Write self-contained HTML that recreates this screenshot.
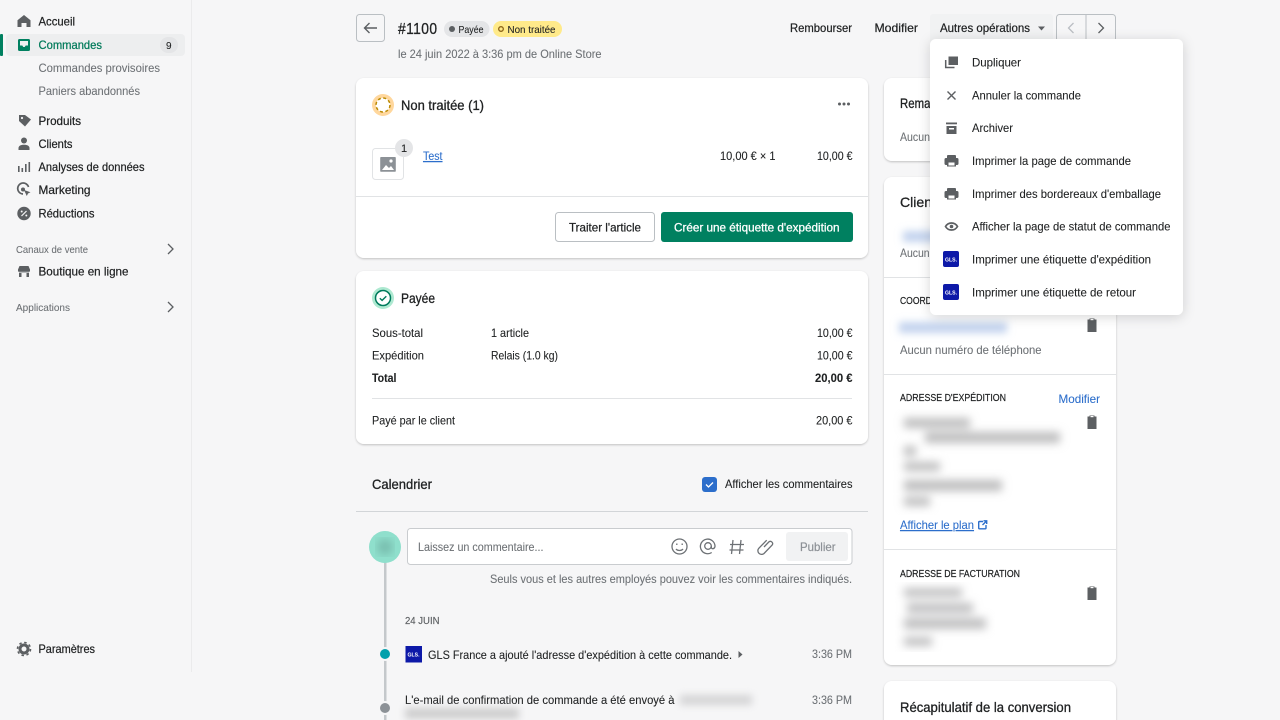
<!DOCTYPE html>
<html lang="fr"><head><meta charset="utf-8"><title>#1100</title>
<style>
html,body{margin:0;padding:0;background:#f6f6f7;width:1280px;height:720px;overflow:hidden}
svg{display:block}
text{font-family:"Liberation Sans",sans-serif;font-size:12px;fill:#202223;stroke:#202223;stroke-width:.08}
.m{stroke:#202223;stroke-width:.22}
.g{fill:#6d7175;stroke:#6d7175}
.h{font-size:14px;stroke:#202223;stroke-width:.3}
.s{font-size:10.5px;stroke:#202223;stroke-width:.2}
.b{font-weight:bold}
.l{fill:#2c6ecb;stroke:#2c6ecb}
.i{fill:#5c5f62}
</style></head><body>
<svg xmlns="http://www.w3.org/2000/svg" width="1280" height="720" viewBox="0 0 1280 720">
<defs>
<filter id="c" x="-5%" y="-5%" width="110%" height="110%"><feDropShadow dx="0" dy="1" stdDeviation="1" flood-color="#000" flood-opacity=".22"/></filter>
<filter id="p" x="-15%" y="-15%" width="130%" height="130%"><feDropShadow dx="0" dy="2" stdDeviation="6" flood-color="#000" flood-opacity=".16"/></filter>
<filter id="bl" x="-30%" y="-150%" width="160%" height="400%"><feGaussianBlur stdDeviation="4"/></filter>
<filter id="bg" x="-10%" y="-10%" width="120%" height="120%"><feGaussianBlur stdDeviation="4.500"/></filter>
</defs>
<rect width="1280" height="720" fill="#f6f6f7"/>

<!-- sidebar -->
<rect x="191" y="0" width="1" height="672" fill="#ebebec"/>
<rect x="6" y="34" width="179" height="22" rx="4" fill="#edeeef"/>
<rect x="0" y="34" width="3" height="22" rx="1" fill="#008060"/>
<rect x="160" y="37" width="18" height="16" rx="8" fill="#e4e5e7"/>
<text x="166" y="49" style="font-size:10px" textLength="6">9</text>

<path class="i" d="M24 15l6.5 5.2V27h-4v-4h-5v4h-4v-6.800z"/>
<path d="M19.500 39h9a1.500 1.500 0 0 1 1.500 1.500v9a1.500 1.500 0 0 1-1.500 1.500h-9a1.500 1.500 0 0 1-1.500-1.500v-9a1.500 1.500 0 0 1 1.500-1.500zM20 41v4.500h2.300l1 1.500h1.400l1-1.500H28V41z" fill="#008060" fill-rule="evenodd"/>
<path class="i" d="M19 115h5l1 0 6 4.500-6 7-6-5.500z"/><circle cx="22" cy="118" r="1.100" fill="#f6f6f7"/>
<circle class="i" cx="24" cy="140.500" r="3"/><path class="i" d="M18.500 150v-2c0-2 2-3.300 5.500-3.300s5.500 1.300 5.500 3.300v2z"/>
<g class="i"><rect x="18" y="166" width="1.600" height="6"/><rect x="21.500" y="168" width="1.600" height="4"/><rect x="25" y="164" width="1.600" height="8"/><rect x="28.500" y="162" width="1.600" height="10"/></g>
<path d="M28.500 187a5.500 5.500 0 1 0-5.500 7" fill="none" stroke="#5c5f62" stroke-width="1.700"/><circle class="i" cx="23" cy="189.500" r="2"/><path class="i" d="M24 190l6.500 2.300-2.500 1.200-1.200 2.500z"/>
<circle class="i" cx="24" cy="213.500" r="6.700"/><path d="M21.500 216l5-5" stroke="#f6f6f7" stroke-width="1.200"/><circle cx="21.700" cy="211.500" r="1" fill="#f6f6f7"/><circle cx="26.300" cy="215.500" r="1" fill="#f6f6f7"/>
<path class="i" d="M19.500 266h9l1.500 3.500v1.500a1.800 1.800 0 0 1-1 1v5h-10v-5a1.800 1.800 0 0 1-1-1v-1.500z"/><rect x="21.500" y="273" width="5" height="4.500" fill="#f6f6f7"/><path d="M19 272.200h10" stroke="#f6f6f7" stroke-width=".8"/>
<circle cx="24" cy="649" r="4" fill="none" stroke="#5c5f62" stroke-width="3"/><circle cx="24" cy="649" r="6.500" fill="none" stroke="#5c5f62" stroke-width="1.600" stroke-dasharray="2.500 2.600"/>

<text class="m" x="38.500" y="25.500" textLength="36.500" lengthAdjust="spacingAndGlyphs">Accueil</text>
<text x="38.500" y="49" textLength="63.500" lengthAdjust="spacingAndGlyphs" style="fill:#007a5a;stroke:#007a5a;stroke-width:.25">Commandes</text>
<text class="g" x="38.500" y="72" textLength="121.500" lengthAdjust="spacingAndGlyphs">Commandes provisoires</text>
<text class="g" x="38.500" y="95" textLength="101.500" lengthAdjust="spacingAndGlyphs">Paniers abandonnés</text>
<text class="m" x="38.500" y="125" textLength="42.500" lengthAdjust="spacingAndGlyphs">Produits</text>
<text class="m" x="38.500" y="148" textLength="34" lengthAdjust="spacingAndGlyphs">Clients</text>
<text class="m" x="38.500" y="171" textLength="106" lengthAdjust="spacingAndGlyphs">Analyses de données</text>
<text class="m" x="38.500" y="194" textLength="52" lengthAdjust="spacingAndGlyphs">Marketing</text>
<text class="m" x="38.500" y="217.500" textLength="56" lengthAdjust="spacingAndGlyphs">Réductions</text>
<text class="g" x="16" y="253" style="font-size:10.500px" textLength="72" lengthAdjust="spacingAndGlyphs">Canaux de vente</text>
<path d="M168 244l5 5-5 5" fill="none" stroke="#5c5f62" stroke-width="1.300"/>
<text class="m" x="38.500" y="275.500" textLength="90" lengthAdjust="spacingAndGlyphs">Boutique en ligne</text>
<text class="g" x="16" y="311" style="font-size:10.500px" textLength="54" lengthAdjust="spacingAndGlyphs">Applications</text>
<path d="M168 302l5 5-5 5" fill="none" stroke="#5c5f62" stroke-width="1.300"/>
<text class="m" x="38.500" y="653" textLength="56.500" lengthAdjust="spacingAndGlyphs">Paramètres</text>

<!-- header -->
<rect x="356.500" y="14.500" width="28" height="27" rx="3" fill="#f6f6f7" stroke="#babfc3"/>
<path d="M377 28h-12M369.500 23l-5 5 5 5" fill="none" stroke="#5c5f62" stroke-width="1.400"/>
<text x="398" y="34" style="font-size:16px;stroke:#202223;stroke-width:.3;letter-spacing:.5px" textLength="39.500" lengthAdjust="spacingAndGlyphs">#1100</text>
<rect x="444" y="21" width="45.500" height="16" rx="8" fill="#e4e5e7"/><circle cx="452" cy="29" r="3" fill="#5c5f62"/>
<text x="458.500" y="33" style="font-size:10.500px" textLength="25" lengthAdjust="spacingAndGlyphs">Payée</text>
<rect x="493" y="21" width="69" height="16" rx="8" fill="#ffea8a"/><circle cx="501" cy="29" r="2.300" fill="none" stroke="#8a6116" stroke-width="1.300"/>
<text x="507.500" y="33" style="font-size:10.500px" textLength="48" lengthAdjust="spacingAndGlyphs">Non traitée</text>
<text class="g" x="398" y="58" textLength="203.500" lengthAdjust="spacingAndGlyphs">le 24 juin 2022 à 3:36 pm de Online Store</text>
<text class="m" x="790" y="32" textLength="62" lengthAdjust="spacingAndGlyphs">Rembourser</text>
<text class="m" x="874.500" y="32" textLength="43.500" lengthAdjust="spacingAndGlyphs">Modifier</text>
<rect x="930" y="14" width="123" height="30" rx="3" fill="#f1f2f3"/>
<text class="m" x="940" y="32" textLength="90" lengthAdjust="spacingAndGlyphs">Autres opérations</text>
<path d="M1038 26.500h7l-3.500 4z" fill="#5c5f62"/>
<rect x="1056.500" y="14.500" width="59" height="27" rx="3" fill="#f6f6f7" stroke="#babfc3"/><path d="M1086 14v28" stroke="#babfc3"/>
<path d="M1073.500 23l-5 5 5 5" fill="none" stroke="#babec3" stroke-width="1.300"/>
<path d="M1098.500 23l5 5-5 5" fill="none" stroke="#5c5f62" stroke-width="1.300"/>

<!-- card 1 -->
<rect x="356" y="78" width="512" height="180" rx="8" fill="#fff" filter="url(#c)"/>
<circle cx="383" cy="105" r="11" fill="#ffd79d"/><circle cx="383" cy="105" r="7" fill="#fff" stroke="#b98900" stroke-width="1.500" stroke-dasharray="3 2.500"/>
<text class="h" x="401" y="110" textLength="83" lengthAdjust="spacingAndGlyphs">Non traitée (1)</text>
<g fill="#5c5f62"><circle cx="839.500" cy="104" r="1.500"/><circle cx="844" cy="104" r="1.500"/><circle cx="848.500" cy="104" r="1.500"/></g>
<rect x="372.500" y="148.500" width="31" height="31" rx="3" fill="#fff" stroke="#e1e3e5"/>
<path d="M381 157h14a.8.8 0 0 1 .8.8V171a.8.8 0 0 1-.8.8h-14a.8.8 0 0 1-.8-.8v-13.200a.8.8 0 0 1 .8-.8z" fill="#8c9196"/>
<path d="M382 170l4-5 3 3 2-2 3 4z" fill="#fff"/><circle cx="391" cy="161" r="1.600" fill="#fff"/>
<circle cx="404" cy="148" r="9" fill="#e4e5e7"/><text x="401" y="152" style="font-size:11px" textLength="6">1</text>
<text class="l" x="423" y="160" text-decoration="underline" textLength="19.500" lengthAdjust="spacingAndGlyphs">Test</text>
<text x="720" y="160" textLength="55.500" lengthAdjust="spacingAndGlyphs">10,00 € × 1</text>
<text x="817" y="160" textLength="35.500" lengthAdjust="spacingAndGlyphs">10,00 €</text>
<rect x="356" y="196" width="512" height="1" fill="#e1e3e5"/>
<rect x="555.500" y="212.500" width="99" height="29" rx="3" fill="#fff" stroke="#babfc3"/>
<text class="m" x="569" y="231.500" textLength="72" lengthAdjust="spacingAndGlyphs">Traiter l'article</text>
<rect x="661" y="212" width="192" height="30" rx="3" fill="#008060"/>
<text x="674" y="231.500" style="fill:#fff;stroke:#fff;stroke-width:.28" textLength="165.500" lengthAdjust="spacingAndGlyphs">Créer une étiquette d'expédition</text>

<!-- card 2 -->
<rect x="356" y="271" width="512" height="173" rx="8" fill="#fff" filter="url(#c)"/>
<circle cx="383" cy="298" r="11" fill="#aee9d1"/><circle cx="383" cy="298" r="7.500" fill="#fff" stroke="#007a5c" stroke-width="1.500"/>
<path d="M379.800 298.200l2.300 2.200 4.200-4.200" fill="none" stroke="#007a5c" stroke-width="1.400"/>
<text class="h" x="401" y="303" textLength="34" lengthAdjust="spacingAndGlyphs">Payée</text>
<text x="372" y="337" textLength="51" lengthAdjust="spacingAndGlyphs">Sous-total</text>
<text x="491" y="337" textLength="38" lengthAdjust="spacingAndGlyphs">1 article</text>
<text x="817" y="337" textLength="35.500" lengthAdjust="spacingAndGlyphs">10,00 €</text>
<text x="372" y="359.500" textLength="52" lengthAdjust="spacingAndGlyphs">Expédition</text>
<text x="491" y="359.500" textLength="67" lengthAdjust="spacingAndGlyphs">Relais (1.0 kg)</text>
<text x="817" y="359.500" textLength="35.500" lengthAdjust="spacingAndGlyphs">10,00 €</text>
<text class="b" x="372" y="382" textLength="24.500" lengthAdjust="spacingAndGlyphs">Total</text>
<text class="b" x="815" y="382" textLength="37.500" lengthAdjust="spacingAndGlyphs">20,00 €</text>
<rect x="372" y="398" width="480" height="1" fill="#e1e3e5"/>
<text x="372" y="424.500" textLength="83" lengthAdjust="spacingAndGlyphs">Payé par le client</text>
<text x="816" y="424.500" textLength="36.500" lengthAdjust="spacingAndGlyphs">20,00 €</text>

<!-- timeline -->
<text class="h" x="372" y="489" textLength="60" lengthAdjust="spacingAndGlyphs">Calendrier</text>
<rect x="702" y="477" width="15" height="15" rx="3" fill="#2c6ecb"/><path d="M706 484.500l2.500 2.500 4.500-4.500" fill="none" stroke="#fff" stroke-width="1.300"/>
<text x="725" y="488" textLength="127.500" lengthAdjust="spacingAndGlyphs">Afficher les commentaires</text>
<rect x="356" y="511" width="512" height="1" fill="#d2d5d8"/>
<rect x="384" y="560" width="2.500" height="160" fill="#c4c8cb"/>
<circle cx="385" cy="547" r="16" fill="#8fdfcc"/><circle cx="385" cy="547" r="8" fill="#78bdae" filter="url(#bg)"/>
<rect x="407.500" y="528.500" width="444.500" height="36" rx="3" fill="#fff" stroke="#c9cccf"/>
<text class="g" x="418" y="551" textLength="125.500" lengthAdjust="spacingAndGlyphs">Laissez un commentaire...</text>
<g fill="none" stroke="#6d7175" stroke-width="1.300">
<circle cx="679.500" cy="546.500" r="7.500"/><path d="M676 549c1.500 2 5.500 2 7 0"/><path d="M676.800 543.500v1.500M682.200 543.500v1.500"/>
<circle cx="708" cy="546" r="3.300"/><path d="M711.300 546v1.300c0 2 3.200 2 3.700-.8a7.300 7.300 0 1 0-3.300 6"/>
<path d="M733 540l-1.500 14M741 540l-1.500 14M730 544.500h14M729.500 550h14"/>
<path d="M764 547l5-5.200a2.300 2.300 0 0 1 3.200 3.200l-8.300 8.600a3.700 3.700 0 0 1-5.200-5.200l8-8.200"/>
</g>
<rect x="786" y="532" width="62" height="29" rx="3" fill="#f1f2f3"/>
<text x="800" y="551" style="fill:#8c9196;stroke:#8c9196;stroke-width:.2" textLength="35.500" lengthAdjust="spacingAndGlyphs">Publier</text>
<text class="g" x="490" y="583" textLength="362" lengthAdjust="spacingAndGlyphs">Seuls vous et les autres employés pouvez voir les commentaires indiqués.</text>
<text x="405" y="624" style="font-size:10px;fill:#5c5f62;stroke:#5c5f62;stroke-width:.15" textLength="34.500" lengthAdjust="spacingAndGlyphs">24 JUIN</text>
<circle cx="385" cy="654" r="7" fill="#f6f6f7"/><circle cx="385" cy="654" r="5" fill="#00a0ac"/>
<rect x="405.500" y="646" width="16.500" height="16.500" fill="#0d19a8"/>
<text x="407.500" y="656.500" style="font-size:5.500px;font-weight:bold;fill:#fff;stroke:none" textLength="12" lengthAdjust="spacingAndGlyphs">GLS.</text>
<text x="428" y="659" textLength="304" lengthAdjust="spacingAndGlyphs">GLS France a ajouté l'adresse d'expédition à cette commande.</text>
<path d="M738.500 651l4 3.500-4 3.500z" fill="#5c5f62"/>
<text class="g" x="812" y="658" textLength="40" lengthAdjust="spacingAndGlyphs">3:36 PM</text>
<text x="405" y="704" textLength="269.500" lengthAdjust="spacingAndGlyphs">L'e-mail de confirmation de commande a été envoyé à</text>
<rect x="680" y="695" width="72" height="10" fill="#d4d4d5" filter="url(#bl)"/>
<text class="g" x="812" y="704" textLength="40" lengthAdjust="spacingAndGlyphs">3:36 PM</text>
<circle cx="385" cy="708" r="7" fill="#f6f6f7"/><circle cx="385" cy="708" r="5" fill="#8c9196"/>
<rect x="405" y="708" width="114" height="11" fill="#cdcdce" filter="url(#bl)"/>

<!-- right column -->
<rect x="884" y="78" width="232" height="83" rx="8" fill="#fff" filter="url(#c)"/>
<text class="h" x="900" y="108" textLength="59" lengthAdjust="spacingAndGlyphs">Remarques</text>
<text class="g" x="900" y="141" textLength="84" lengthAdjust="spacingAndGlyphs">Aucune remarque</text>
<rect x="884" y="177" width="232" height="488" rx="8" fill="#fff" filter="url(#c)"/>
<text class="h" x="900" y="207" textLength="36" lengthAdjust="spacingAndGlyphs">Client</text>
<rect x="903" y="231" width="40" height="11" fill="#c3d3ee" filter="url(#bl)"/>
<text class="g" x="900" y="257" textLength="90" lengthAdjust="spacingAndGlyphs">Aucune commande</text>
<rect x="884" y="277" width="232" height="1" fill="#e1e3e5"/>
<text class="s" x="900" y="304" textLength="68" lengthAdjust="spacingAndGlyphs">COORDONNÉES</text>
<rect x="899" y="322" width="108" height="11" fill="#c3d3ee" filter="url(#bl)"/>
<path class="i" d="M1087.500 319.500h2v-1h5v1h2v12.500h-9z"/><rect x="1090.500" y="319" width="3" height="1.200" fill="#fff"/>
<text class="g" x="900" y="354" textLength="141.500" lengthAdjust="spacingAndGlyphs">Aucun numéro de téléphone</text>
<rect x="884" y="374" width="232" height="1" fill="#e1e3e5"/>
<text class="s" x="900" y="401" textLength="106" lengthAdjust="spacingAndGlyphs">ADRESSE D'EXPÉDITION</text>
<text class="l" x="1058.500" y="403" textLength="41.500" lengthAdjust="spacingAndGlyphs">Modifier</text>
<path class="i" d="M1087.500 416.500h2v-1h5v1h2v12.500h-9z"/><rect x="1090.500" y="416" width="3" height="1.200" fill="#fff"/>
<g fill="#bdbdbe" filter="url(#bg)">
<rect x="904" y="418" width="66" height="10"/><rect x="925" y="432" width="135" height="11"/><rect x="904" y="446" width="12" height="10"/><rect x="904" y="462" width="36" height="9"/><rect x="904" y="480" width="98" height="11"/><rect x="904" y="497" width="26" height="9"/>
</g>
<text class="l" x="900" y="529" text-decoration="underline" textLength="74" lengthAdjust="spacingAndGlyphs">Afficher le plan</text>
<path d="M983 521.500h-3.500a.8.800 0 0 0-.8.800v5.700a.8.800 0 0 0 .8.800h5.700a.8.800 0 0 0 .8-.8v-3M982.500 525l3.800-3.800M983.500 520.800h3.200v3.200" fill="none" stroke="#2c6ecb" stroke-width="1.400"/>
<rect x="884" y="549" width="232" height="1" fill="#e1e3e5"/>
<text class="s" x="900" y="577" textLength="120" lengthAdjust="spacingAndGlyphs">ADRESSE DE FACTURATION</text>
<path class="i" d="M1087.500 587.500h2v-1h5v1h2v12.500h-9z"/><rect x="1090.500" y="587" width="3" height="1.200" fill="#fff"/>
<g fill="#c0c0c1" filter="url(#bg)">
<rect x="904" y="588" width="58" height="9"/><rect x="907" y="603" width="66" height="10"/><rect x="904" y="618" width="82" height="11"/><rect x="904" y="637" width="28" height="9"/>
</g>
<rect x="884" y="681" width="232" height="60" rx="8" fill="#fff" filter="url(#c)"/>
<text class="h" x="900" y="712" textLength="171" lengthAdjust="spacingAndGlyphs">Récapitulatif de la conversion</text>

<!-- popover -->
<rect x="930" y="39" width="253" height="276" rx="6" fill="#fff" filter="url(#p)"/>
<path class="i" d="M948.500 56.500h9.500v8.500h-9.500z"/><path d="M945.700 60v7.500h8.800" fill="none" stroke="#5c5f62" stroke-width="1.500"/>
<path d="M947.500 91.500l8 8M955.500 91.500l-8 8" stroke="#5c5f62" stroke-width="1.400"/>
<rect class="i" x="946" y="122.500" width="11" height="1.800"/><path class="i" d="M946.500 126h10v8h-10z"/><rect x="949" y="128" width="5" height="1.500" fill="#fff"/>
<path class="i" d="M948 155h7a1 1 0 0 1 1 1v2h1a1.500 1.500 0 0 1 1.500 1.500v4a1.500 1.500 0 0 1-1.500 1.500h-1v1.500h-9V165h-1a1.500 1.500 0 0 1-1.500-1.500v-4A1.500 1.500 0 0 1 946 158h1v-2a1 1 0 0 1 1-1z"/><rect x="948.500" y="162.500" width="6" height="3" fill="#fff"/>
<path class="i" d="M948 188h7a1 1 0 0 1 1 1v2h1a1.500 1.500 0 0 1 1.500 1.500v4a1.500 1.500 0 0 1-1.500 1.500h-1v1.500h-9V198h-1a1.500 1.500 0 0 1-1.500-1.500v-4A1.500 1.500 0 0 1 946 191h1v-2a1 1 0 0 1 1-1z"/><rect x="948.500" y="195.500" width="6" height="3" fill="#fff"/>
<path d="M945.500 226.500c2.800-4.700 9.200-4.700 12 0-2.800 4.700-9.200 4.700-12 0z" fill="#fff" stroke="#5c5f62" stroke-width="1.700"/><circle class="i" cx="951.500" cy="226.500" r="1.800"/>
<rect x="943" y="251" width="16" height="16" rx="2" fill="#0d19a8"/><text x="945" y="261.500" style="font-size:5.500px;font-weight:bold;fill:#fff;stroke:none" textLength="12" lengthAdjust="spacingAndGlyphs">GLS.</text>
<rect x="943" y="284" width="16" height="16" rx="2" fill="#0d19a8"/><text x="945" y="294.500" style="font-size:5.500px;font-weight:bold;fill:#fff;stroke:none" textLength="12" lengthAdjust="spacingAndGlyphs">GLS.</text>
<text x="972" y="66.500" textLength="49" lengthAdjust="spacingAndGlyphs">Dupliquer</text>
<text x="972" y="99.500" textLength="109" lengthAdjust="spacingAndGlyphs">Annuler la commande</text>
<text x="972" y="132" textLength="41" lengthAdjust="spacingAndGlyphs">Archiver</text>
<text x="972" y="165" textLength="159" lengthAdjust="spacingAndGlyphs">Imprimer la page de commande</text>
<text x="972" y="198" textLength="189" lengthAdjust="spacingAndGlyphs">Imprimer des bordereaux d'emballage</text>
<text x="972" y="230.500" textLength="198.500" lengthAdjust="spacingAndGlyphs">Afficher la page de statut de commande</text>
<text x="972" y="263.500" textLength="179" lengthAdjust="spacingAndGlyphs">Imprimer une étiquette d'expédition</text>
<text x="972" y="296.500" textLength="164" lengthAdjust="spacingAndGlyphs">Imprimer une étiquette de retour</text>
</svg>
</body></html>
